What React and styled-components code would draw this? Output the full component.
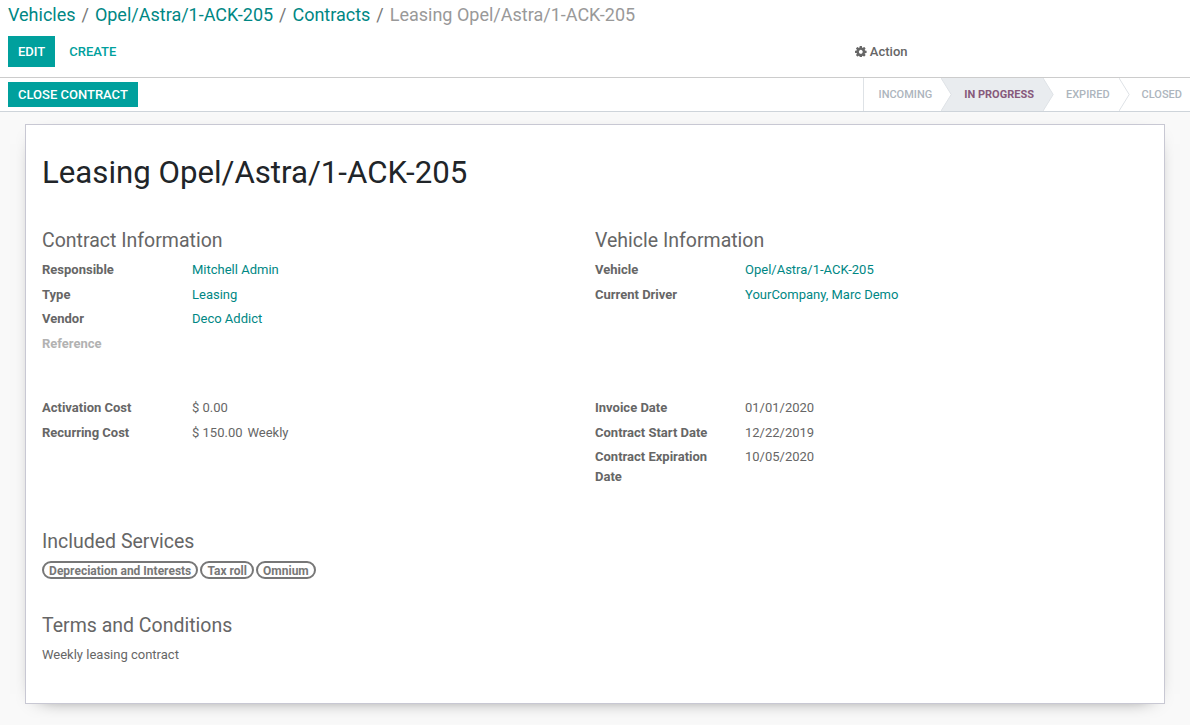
import React, { Fragment } from "react";
import styled, { createGlobalStyle } from "styled-components";

const GlobalStyle = createGlobalStyle`
  *, *::before, *::after { box-sizing: border-box; }
  html, body, #root { height: 100%; }
  body {
    margin: 0;
    overflow: hidden;
    background: #f9f9f9;
    color: #666666;
    font-family: Roboto, "Noto Sans", sans-serif;
    font-size: 13px;
    line-height: 1.5;
  }
`;

const Page = styled.div`
  display: flex;
  flex-direction: column;
  height: 100%;
`;

const ControlPanel = styled.header`
  height: 78px;
  flex: none;
  background: #fff;
  border-bottom: 1px solid #cccccc;
`;

const Breadcrumb = styled.nav`
  display: flex;
  height: 36px;
  padding: 1px 8px 0;
  font-size: 18px;
  line-height: 27px;
  white-space: pre;
`;

const Crumb = styled.a`
  color: ${(p) => (p.$active ? "#999999" : "#008784")};
`;

const Separator = styled.span`
  padding: 0 6px 0 5.9px;
  color: #777777;
`;

const Actions = styled.div`
  display: flex;
  align-items: center;
  height: 31px;
  padding: 0 8px;
`;

const Button = styled.button`
  height: ${(p) => (p.$small ? 25 : 31)}px;
  margin: 0;
  padding: 0 10px;
  border: 0;
  background: ${(p) => (p.$link ? "transparent" : "#00a09d")};
  color: ${(p) => (p.$link ? "#00a09d" : "#fff")};
  font: 500 13px/1.5 Roboto, sans-serif;
  text-transform: uppercase;
`;

const CreateWrap = styled.div`
  margin-left: 4px;
`;

const ActionMenu = styled.div`
  display: flex;
  align-items: center;
  gap: 3.3px;
  margin-left: auto;
  margin-right: 274.5px;
  font-weight: 500;
`;

const GearIcon = styled.svg`
  width: 11.6px;
  height: 11.6px;
  fill: currentColor;
`;

const StatusBar = styled.div`
  display: flex;
  flex: none;
  justify-content: space-between;
  height: 34px;
  padding: 4px 0 0 8px;
  background: #fff;
  border-bottom: 1px solid #ced4da;
`;

const Stages = styled.div`
  display: flex;
  height: 33px;
  margin-top: -4px;
  border-left: 1px solid #dee2e6;
`;

const Stage = styled.div`
  position: relative;
  padding: 0 9px 0 ${(p) => (p.$first ? 14.5 : 23)}px;
  background: ${(p) => (p.$current ? "#e9ecef" : "#fff")};
  color: ${(p) => (p.$current ? "#875a7b" : "#adb5bd")};
  font-size: 11px;
  font-weight: ${(p) => (p.$current ? 700 : 500)};
  line-height: 33px;
  text-transform: uppercase;
  white-space: nowrap;

  &:last-child { padding-right: 8px; }
`;

const Arrow = styled.svg`
  position: absolute;
  z-index: 1;
  top: 0;
  right: -11px;
  width: 11px;
  height: 33px;
`;

const Content = styled.main`
  flex: 1;
  padding: 12px 25px 0;
`;

const Sheet = styled.section`
  height: 580px;
  padding: 24px 16px;
  background: #fff;
  border: 1px solid #c8c8d3;
  box-shadow: 0 5px 20px -15px #000;
`;

const Title = styled.h1`
  height: 78px;
  margin: 0;
  color: #212529;
  font-size: 31.2px;
  font-weight: 400;
  line-height: 47px;
`;

const Columns = styled.div`
  display: grid;
  grid-template-columns: 1fr 1fr;
  height: ${(p) => p.$height}px;
`;

const Heading = styled.h2`
  margin: 0;
  padding-bottom: 2px;
  font-size: 19.5px;
  font-weight: 400;
  line-height: 28px;
`;

const Fields = styled.div`
  padding-top: 3px;
`;

const Field = styled.div`
  display: grid;
  grid-template-columns: 150px 1fr;
  padding-bottom: 5px;
`;

const Label = styled.label`
  padding-right: 30px;
  color: ${(p) => (p.$empty ? "#b2b2b2" : "inherit")};
  font-weight: 700;
`;

const Value = styled.span`
  display: flex;
  gap: 5px;
  color: ${(p) => (p.$link ? "#008784" : "inherit")};
`;

const Services = styled.section`
  height: 84px;
`;

const Tags = styled.div`
  display: flex;
  gap: 2px;
  padding-top: 3px;
`;

const Tag = styled.span`
  height: 18px;
  padding: 0 5.1px;
  border: 2px solid #777777;
  border-radius: 9px;
  color: #777777;
  font-size: 12px;
  font-weight: 700;
  line-height: 16px;
`;

const Terms = styled.p`
  margin: 3px 0 0;
`;

function Gear() {
  return (
    <GearIcon viewBox="128 128 1536 1536">
      <path d="M1152 896q0-106-75-181t-181-75-181 75-75 181 75 181 181 75 181-75 75-181zm512-109v222q0 12-8 23t-20 13l-185 28q-19 54-39 91 35 50 107 138 10 12 10 25t-9 23q-27 37-99 108t-94 71q-12 0-26-9l-138-108q-44 23-91 38-16 136-29 186-7 28-36 28h-222q-14 0-24.5-8.5t-11.5-21.5l-28-184q-49-16-90-37l-141 107q-10 9-25 9-14 0-25-11-126-114-165-168-7-10-7-23 0-12 8-23 15-21 51-66.5t54-70.5q-27-50-41-99l-183-27q-13-2-21-12.5t-8-23.5v-222q0-12 8-23t19-13l186-28q14-46 39-92-40-57-107-138-10-12-10-24 0-10 9-23 26-36 98.5-107.5t94.5-71.5q13 0 26 10l138 107q44-23 91-38 16-136 29-186 7-28 36-28h222q14 0 24.5 8.5t11.5 21.5l28 184q49 16 90 37l142-107q9-9 24-9 13 0 25 10 129 119 165 170 7 8 7 22 0 12-8 23-15 21-51 66.5t-54 70.5q26 50 41 98l183 28q13 2 21 12.5t8 23.5z" />
    </GearIcon>
  );
}

function StageArrow({ fill }) {
  return (
    <Arrow viewBox="0 0 11 33">
      <path d="M0 0L10.2 16.5L0 33Z" fill={fill} />
      <path d="M0 0L10.2 16.5L0 33" fill="none" stroke="#dee2e6" />
    </Arrow>
  );
}

function FieldRow({ label, value, link }) {
  return (
    <Field>
      <Label $empty={!value}>{label}</Label>
      <Value $link={link}>
        {[].concat(value || []).map((v) => <span key={v}>{v}</span>)}
      </Value>
    </Field>
  );
}

const crumbs = ["Vehicles", "Opel/Astra/1-ACK-205", "Contracts", "Leasing Opel/Astra/1-ACK-205"];
const stages = ["Incoming", "In Progress", "Expired", "Closed"];

export default function App() {
  return (
    <Page>
      <GlobalStyle />
      <ControlPanel>
        <Breadcrumb>
          {crumbs.map((name, i) => (
            <Fragment key={name}>
              {i > 0 && <Separator>/</Separator>}
              <Crumb $active={i === crumbs.length - 1}>{name}</Crumb>
            </Fragment>
          ))}
        </Breadcrumb>
        <Actions>
          <Button>Edit</Button>
          <CreateWrap><Button $link>Create</Button></CreateWrap>
          <ActionMenu><Gear /> Action</ActionMenu>
        </Actions>
      </ControlPanel>
      <StatusBar>
        <Button $small>Close Contract</Button>
        <Stages>
          {stages.map((name, i) => (
            <Stage key={name} $first={i === 0} $current={i === 1}>
              {name}
              {i < 3 && <StageArrow fill={i === 1 ? "#e9ecef" : "#fff"} />}
            </Stage>
          ))}
        </Stages>
      </StatusBar>
      <Content>
        <Sheet>
          <Title>Leasing Opel/Astra/1-ACK-205</Title>
          <Columns $height={171}>
            <div>
              <Heading>Contract Information</Heading>
              <Fields>
                <FieldRow label="Responsible" value="Mitchell Admin" link />
                <FieldRow label="Type" value="Leasing" link />
                <FieldRow label="Vendor" value="Deco Addict" link />
                <FieldRow label="Reference" />
              </Fields>
            </div>
            <div>
              <Heading>Vehicle Information</Heading>
              <Fields>
                <FieldRow label="Vehicle" value="Opel/Astra/1-ACK-205" link />
                <FieldRow label="Current Driver" value="YourCompany, Marc Demo" link />
              </Fields>
            </div>
          </Columns>
          <Columns $height={130}>
            <div>
              <FieldRow label="Activation Cost" value="$ 0.00" />
              <FieldRow label="Recurring Cost" value={["$ 150.00", "Weekly"]} />
            </div>
            <div>
              <FieldRow label="Invoice Date" value="01/01/2020" />
              <FieldRow label="Contract Start Date" value="12/22/2019" />
              <FieldRow label="Contract Expiration Date" value="10/05/2020" />
            </div>
          </Columns>
          <Services>
            <Heading>Included Services</Heading>
            <Tags>
              <Tag>Depreciation and Interests</Tag>
              <Tag>Tax roll</Tag>
              <Tag>Omnium</Tag>
            </Tags>
          </Services>
          <Heading>Terms and Conditions</Heading>
          <Terms>Weekly leasing contract</Terms>
        </Sheet>
      </Content>
    </Page>
  );
}
